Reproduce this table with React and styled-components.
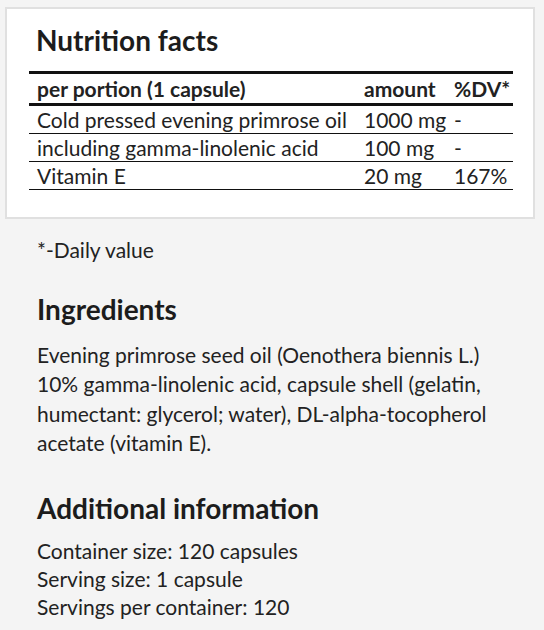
import React from "react";
import styled, { createGlobalStyle } from "styled-components";

const GlobalStyle = createGlobalStyle`
  html, body {
    margin: 0;
    padding: 0;
    background: #f4f4f4;
  }
  body {
    font-family: Lato, "Liberation Sans", sans-serif;
    color: #222;
  }
`;

const Page = styled.div`
  box-sizing: border-box;
  width: 544px;
  min-height: 630px;
  padding: 7px 9px 0 5px;
`;

const Card = styled.section`
  background: #fff;
  border: 2px solid #e0e0e0;
  padding: 15px 20px 27px 22px;
`;

const CardTitle = styled.h2`
  margin: 0 0 13px 0;
  padding-left: 7px;
  font-size: 28px;
  line-height: 1.2;
  font-weight: 700;
  color: #1c1c1c;
`;

const FactsTable = styled.table`
  width: 100%;
  border-collapse: collapse;
  table-layout: fixed;
  font-size: 21px;
  color: #222;
`;

const HeadRow = styled.tr`
  border-top: 3px solid #111;
  border-bottom: 3px solid #111;
`;

const HeadCell = styled.th`
  text-align: left;
  font-weight: 700;
  padding: 0 0 0 8px;
  height: 29px;
  line-height: 29px;
  white-space: nowrap;
`;

const Row = styled.tr`
  border-bottom: 1px solid #111;
`;

const Cell = styled.td`
  padding: 0 0 0 8px;
  height: 27px;
  line-height: 27px;
  white-space: nowrap;
`;

const Info = styled.div`
  padding: 16px 0 0 32px;
  font-size: 21px;
`;

const Note = styled.p`
  margin: 0;
  line-height: 29.5px;
`;

const Heading = styled.h3`
  margin: ${(p) => p.$top}px 0 ${(p) => p.$bottom}px 0;
  font-size: 28px;
  line-height: 1.2;
  font-weight: 700;
  color: #1c1c1c;
`;

const Text = styled.p`
  margin: 0;
  width: 470px;
  line-height: 29.5px;
`;

const Lines = styled.div`
  line-height: 28px;
`;

const rows = [
  ["Cold pressed evening primrose oil", "1000 mg", "-"],
  ["including gamma-linolenic acid", "100 mg", "-"],
  ["Vitamin E", "20 mg", "167%"],
];

export default function App() {
  return (
    <>
      <GlobalStyle />
      <Page>
        <Card>
          <CardTitle>Nutrition facts</CardTitle>
          <FactsTable>
            <colgroup>
              <col />
              <col style={{ width: 90 }} />
              <col style={{ width: 67 }} />
            </colgroup>
            <thead>
              <HeadRow>
                <HeadCell>per portion (1 capsule)</HeadCell>
                <HeadCell>amount</HeadCell>
                <HeadCell>%DV*</HeadCell>
              </HeadRow>
            </thead>
            <tbody>
              {rows.map((r) => (
                <Row key={r[0]}>
                  <Cell>{r[0]}</Cell>
                  <Cell>{r[1]}</Cell>
                  <Cell>{r[2]}</Cell>
                </Row>
              ))}
            </tbody>
          </FactsTable>
        </Card>
        <Info>
          <Note>*-Daily value</Note>
          <Heading $top={29} $bottom={13}>Ingredients</Heading>
          <Text>
            Evening primrose seed oil (Oenothera biennis L.) 10% gamma-linolenic
            acid, capsule shell (gelatin, humectant: glycerol; water),
            DL-alpha-tocopherol acetate (vitamin E).
          </Text>
          <Heading $top={34} $bottom={12}>Additional information</Heading>
          <Lines>
            <div>Container size: 120 capsules</div>
            <div>Serving size: 1 capsule</div>
            <div>Servings per container: 120</div>
          </Lines>
        </Info>
      </Page>
    </>
  );
}
